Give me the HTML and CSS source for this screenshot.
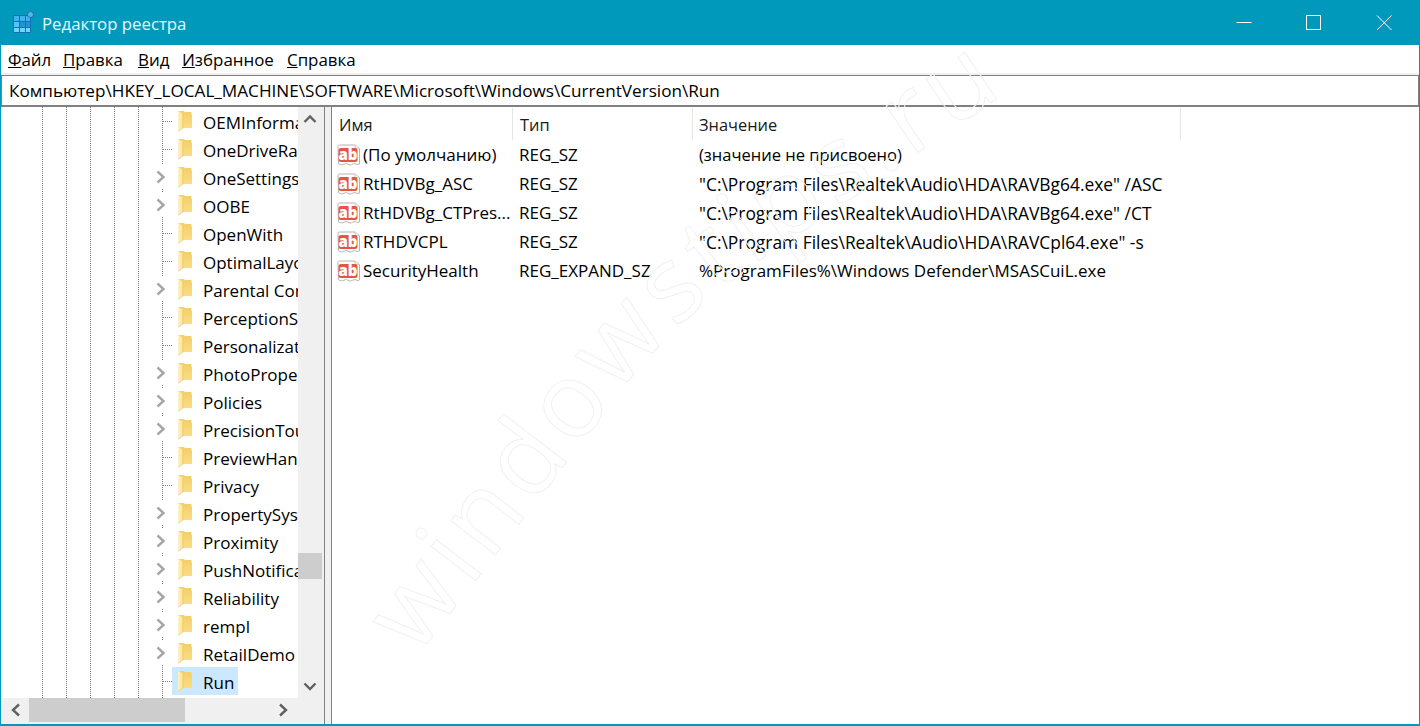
FILE: index.html
```html
<!DOCTYPE html>
<html lang="ru">
<head>
<meta charset="utf-8">
<title>Редактор реестра</title>
<link rel="stylesheet" href="styles.css">
</head>
<body>
<svg class="defs" width="0" height="0">
  <defs>
    <linearGradient id="fb" x1="0" y1="0" x2="0" y2="1"><stop offset="0" stop-color="#f3d26f"/><stop offset="1" stop-color="#fbdc83"/></linearGradient>
    <linearGradient id="ff" x1="0" y1="0" x2="1" y2="0"><stop offset="0" stop-color="#fff3c4"/><stop offset="1" stop-color="#fde08a"/></linearGradient>
    <symbol id="folder" viewBox="0 0 16 22">
      <path d="M1 1h6l1 1h6.500v16H6z" fill="#f4d06c"/>
      <path d="M6 5h9v13H6z" fill="url(#fb)"/>
      <path d="M1 1l5 2.500V18l-5 3.500z" fill="url(#ff)"/>
      <path d="M1 21.500L6 18V3.500" fill="none" stroke="#e6c25c" stroke-width=".6"/>
    </symbol>
    <symbol id="ab" viewBox="0 0 24 24">
      <path d="M1 3.500C1 2.500 1.500 2 2.500 2H18l4.500 3.500V21c-2 1.500-3.500-.8-5.500-.3s-3 2-5 1-3-1.500-5-.5-3 .8-5.500-.5z" fill="#fff" stroke="#b4b4b4"/>
      <path d="M18 2v3.500h4.500" fill="#eee" stroke="#c8c8c8" stroke-width=".8"/>
      <rect x="1.500" y="5" width="19" height="14" rx="2.500" fill="#e4563f"/>
      <text class="ab-text" x="11" y="16.500">ab</text>
    </symbol>
    <symbol id="chev" viewBox="0 0 12 14">
      <path d="M2.500 1.500L8.500 7l-6 5.500" fill="none" stroke="#a6a6a6" stroke-width="2.400"/>
    </symbol>
    <path id="wm-path" d="M417 657L622 390Q680 315 760 260L1030 76"/>
  </defs>
</svg>

<div class="window">
  <header class="titlebar">
    <svg class="app-icon" width="22" height="22" viewBox="0 0 22 22">
      <rect x="1" y="4" width="18" height="18" fill="#1470b8"/>
      <g fill="#3fb4ea">
        <rect x="2" y="5" width="5" height="5"/><rect x="8" y="5" width="5" height="5"/><rect x="14" y="5" width="4" height="5"/>
        <rect x="2" y="11" width="5" height="5" fill="#52c6f8"/><rect x="8" y="11" width="5" height="5" fill="#1f93d4"/><rect x="14" y="11" width="4" height="5" fill="#1f93d4"/>
        <rect x="2" y="17" width="5" height="4" fill="#6ed5fb"/><rect x="8" y="17" width="5" height="4" fill="#6ed5fb"/><rect x="14" y="17" width="4" height="4" fill="#6ed5fb"/>
      </g>
      <circle cx="18.500" cy="3.500" r="3" fill="#5cb6dc" stroke="#1470b8"/>
    </svg>
    <span class="title">Редактор реестра</span>
    <div class="controls">
      <button class="ctl" aria-label="Свернуть"><svg width="16" height="16" viewBox="0 0 16 16"><path d="M0.500 7.500h15" stroke="#fff" fill="none"/></svg></button>
      <button class="ctl" aria-label="Развернуть"><svg width="16" height="16" viewBox="0 0 16 16"><rect x="0.500" y="0.500" width="14" height="14" stroke="#fff" fill="none"/></svg></button>
      <button class="ctl" aria-label="Закрыть"><svg width="16" height="16" viewBox="0 0 16 16"><path d="M1 .5l14.500 14.500M15.500 .5L1 15" stroke="#fff" fill="none"/></svg></button>
    </div>
  </header>

  <nav class="menubar">
    <span class="menu m1"><u>Ф</u>айл</span>
    <span class="menu m2"><u>П</u>равка</span>
    <span class="menu m3"><u>В</u>ид</span>
    <span class="menu m4"><u>И</u>збранное</span>
    <span class="menu m5"><u>С</u>правка</span>
  </nav>

  <div class="address">Компьютер\HKEY_LOCAL_MACHINE\SOFTWARE\Microsoft\Windows\CurrentVersion\Run</div>

  <main class="panes">
    <aside class="treepane">
      <div class="tree-top">
        <div class="tree">
          <div class="node leaf"><svg class="folder"><use href="#folder"/></svg><span class="label">OEMInformation</span></div>
          <div class="node leaf"><svg class="folder"><use href="#folder"/></svg><span class="label">OneDriveRamps</span></div>
          <div class="node"><svg class="chev"><use href="#chev"/></svg><svg class="folder"><use href="#folder"/></svg><span class="label">OneSettings</span></div>
          <div class="node"><svg class="chev"><use href="#chev"/></svg><svg class="folder"><use href="#folder"/></svg><span class="label">OOBE</span></div>
          <div class="node leaf"><svg class="folder"><use href="#folder"/></svg><span class="label">OpenWith</span></div>
          <div class="node leaf"><svg class="folder"><use href="#folder"/></svg><span class="label">OptimalLayout</span></div>
          <div class="node"><svg class="chev"><use href="#chev"/></svg><svg class="folder"><use href="#folder"/></svg><span class="label">Parental Controls</span></div>
          <div class="node leaf"><svg class="folder"><use href="#folder"/></svg><span class="label">PerceptionSimulation</span></div>
          <div class="node leaf"><svg class="folder"><use href="#folder"/></svg><span class="label">Personalization</span></div>
          <div class="node"><svg class="chev"><use href="#chev"/></svg><svg class="folder"><use href="#folder"/></svg><span class="label">PhotoPropertyHandler</span></div>
          <div class="node"><svg class="chev"><use href="#chev"/></svg><svg class="folder"><use href="#folder"/></svg><span class="label">Policies</span></div>
          <div class="node"><svg class="chev"><use href="#chev"/></svg><svg class="folder"><use href="#folder"/></svg><span class="label">PrecisionTouchPad</span></div>
          <div class="node leaf"><svg class="folder"><use href="#folder"/></svg><span class="label">PreviewHandlers</span></div>
          <div class="node leaf"><svg class="folder"><use href="#folder"/></svg><span class="label">Privacy</span></div>
          <div class="node"><svg class="chev"><use href="#chev"/></svg><svg class="folder"><use href="#folder"/></svg><span class="label">PropertySystem</span></div>
          <div class="node"><svg class="chev"><use href="#chev"/></svg><svg class="folder"><use href="#folder"/></svg><span class="label">Proximity</span></div>
          <div class="node"><svg class="chev"><use href="#chev"/></svg><svg class="folder"><use href="#folder"/></svg><span class="label">PushNotifications</span></div>
          <div class="node"><svg class="chev"><use href="#chev"/></svg><svg class="folder"><use href="#folder"/></svg><span class="label">Reliability</span></div>
          <div class="node"><svg class="chev"><use href="#chev"/></svg><svg class="folder"><use href="#folder"/></svg><span class="label">rempl</span></div>
          <div class="node"><svg class="chev"><use href="#chev"/></svg><svg class="folder"><use href="#folder"/></svg><span class="label">RetailDemo</span></div>
          <div class="node leaf last"><span class="selbg"></span><svg class="folder"><use href="#folder"/></svg><span class="label">Run</span></div>
        </div>
        <div class="vscroll">
          <svg class="arrow" width="24" height="24" viewBox="0 0 24 24"><path d="M6.500 15L12 9.500l5.500 5.500" fill="none" stroke="#606060" stroke-width="2.400"/></svg>
          <div class="vtrack"><div class="vthumb"></div></div>
          <svg class="arrow" width="24" height="24" viewBox="0 0 24 24"><path d="M6.500 9.500L12 15l5.500-5.500" fill="none" stroke="#606060" stroke-width="2.400"/></svg>
        </div>
      </div>
      <div class="hscroll">
        <svg class="arrow" width="27" height="24" viewBox="0 0 27 24"><path d="M17 6.500L11 12l6 5.500" fill="none" stroke="#606060" stroke-width="2.400"/></svg>
        <div class="htrack"><div class="hthumb"></div></div>
        <svg class="arrow hs-right" width="24" height="24" viewBox="0 0 24 24"><path d="M9 6.500l6 5.500-6 5.500" fill="none" stroke="#606060" stroke-width="2.400"/></svg>
      </div>
    </aside>
    <div class="splitter"></div>
    <section class="list">
      <div class="list-head">
        <div class="th th-name">Имя</div>
        <div class="th th-type">Тип</div>
        <div class="th th-value">Значение</div>
      </div>
      <div class="row"><svg class="ab"><use href="#ab"/></svg><span class="c-name">(По умолчанию)</span><span class="c-type">REG_SZ</span><span class="c-value narrow">(значение не присвоено)</span></div>
      <div class="row"><svg class="ab"><use href="#ab"/></svg><span class="c-name">RtHDVBg_ASC</span><span class="c-type">REG_SZ</span><span class="c-value wide">"C:\Program Files\Realtek\Audio\HDA\RAVBg64.exe" /ASC</span></div>
      <div class="row"><svg class="ab"><use href="#ab"/></svg><span class="c-name">RtHDVBg_CTPres...</span><span class="c-type">REG_SZ</span><span class="c-value wide">"C:\Program Files\Realtek\Audio\HDA\RAVBg64.exe" /CT</span></div>
      <div class="row"><svg class="ab"><use href="#ab"/></svg><span class="c-name">RTHDVCPL</span><span class="c-type">REG_SZ</span><span class="c-value wide">"C:\Program Files\Realtek\Audio\HDA\RAVCpl64.exe" -s</span></div>
      <div class="row"><svg class="ab"><use href="#ab"/></svg><span class="c-name">SecurityHealth</span><span class="c-type">REG_EXPAND_SZ</span><span class="c-value">%ProgramFiles%\Windows Defender\MSASCuiL.exe</span></div>
    </section>
  </main>

  <svg class="watermark" width="1420" height="726" viewBox="0 0 1420 726" aria-hidden="true">
    <text class="wm-text"><textPath href="#wm-path">windowstips.ru</textPath></text>
  </svg>
</div>
</body>
</html>
```
FILE: styles.css
```css
* { box-sizing: border-box; }
html, body { margin: 0; padding: 0; height: 100%; }
body { font-family: "Open Sans", "Noto Sans", sans-serif; font-size: 17px; color: #000; background: #fff; overflow: hidden; }
.defs { position: absolute; }

.window { position: relative; width: 1420px; height: 726px; display: flex; flex-direction: column; border: 1px solid #0099bc; border-bottom-width: 2px; background: #f0f0f0; }

.titlebar { flex: 0 0 44px; background: #0099bc; display: flex; align-items: center; color: #fff; padding-left: 11px; }
.app-icon { flex: none; margin-top: -2px; }
.title { margin-left: 8px; font-size: 16.800px; color: #e8f7fb; }
.controls { margin-left: auto; display: flex; }
.ctl { width: 70px; height: 44px; background: none; border: 0; padding: 0; display: flex; align-items: center; justify-content: center; margin-top: -1px; }

.menubar { flex: 0 0 28px; background: #fff; display: flex; align-items: center; padding: 1px 0 0 7px; line-height: 27px; margin-bottom: 2px; font-size: 16.900px; }
.menu { white-space: nowrap; }
.m1 { width: 55px; }
.m2 { width: 75px; }
.m3 { width: 44px; }
.m4 { width: 105px; }

.address { flex: 0 0 32px; min-height: 0; overflow: hidden; background: #fff; border: 1px solid #808080; border-bottom-width: 2px; padding-left: 7px; line-height: 30px; white-space: nowrap; font-size: 17.150px; }

.panes { flex: 1; min-height: 0; display: flex; }
.treepane { flex: 0 0 323px; display: flex; flex-direction: column; background: #f0f0f0; border-right: 1px solid #808080; padding-left: 1px; }
.tree-top { height: 591px; display: flex; }
.tree { width: 296px; height: 591px; overflow: hidden; background-color: #fff;
  background-image:
    linear-gradient(#808080 50%, transparent 50%), linear-gradient(#808080 50%, transparent 50%),
    linear-gradient(#808080 50%, transparent 50%), linear-gradient(#808080 50%, transparent 50%),
    linear-gradient(#808080 50%, transparent 50%), linear-gradient(#808080 50%, transparent 50%);
  background-size: 1px 2px;
  background-repeat: repeat-y;
  background-position: 40px 0, 64px 0, 88px 0, 112px 0, 136px 0, 160px 0; }
.node { position: relative; height: 28px; display: flex; align-items: center; padding-left: 175px; white-space: nowrap; }
.node .label { position: relative; margin-left: 10px; line-height: 30px; top: 2px; }
.folder { position: relative; width: 16px; height: 22px; margin-top: -1px; flex: none; }
.chev { position: absolute; left: 153px; top: 2px; width: 12px; height: 24px; background: #fff; }
.leaf::before { content: ""; position: absolute; left: 161px; top: 14px; width: 10px; height: 1px; background: linear-gradient(90deg, #808080 50%, transparent 50%) 0 0 / 2px 1px repeat-x; }
.selbg { position: absolute; left: 170px; top: 0; width: 66px; height: 28px; background: #cce8ff; }

.vscroll { flex: 0 0 26px; display: flex; flex-direction: column; background: #f0f0f0; padding-right: 2px; }
.arrow { flex: none; display: block; }
.vtrack { flex: 1; display: flex; flex-direction: column; justify-content: flex-end; padding-bottom: 95px; }
.vthumb { height: 26px; background: #cdcdcd; }

.hscroll { flex: 0 0 24px; display: flex; width: 320px; background: #f0f0f0; }
.htrack { flex: 1; }
.hthumb { width: 156px; height: 24px; background: #cdcdcd; }
.hs-right { margin-right: 27px; }

.splitter { flex: 0 0 6px; background: #f0f0f0; }
.list { flex: 1; min-width: 0; background: #fff; border-left: 1px solid #808080; padding-top: 1px; }
.list-head { display: flex; height: 32px; font-size: 16.400px; }
.th { line-height: 34px; padding-left: 7px; border-right: 1px solid #e5e5e5; white-space: nowrap; color: #1a1a1a; }
.th-name { width: 181px; }
.th-type { width: 180px; }
.th-value { width: 488px; padding-left: 6px; }
.row { height: 29px; display: flex; align-items: center; white-space: nowrap; padding-left: 5px; }
.ab { width: 24px; height: 24px; flex: none; }
.ab-text { font: 800 15px "Open Sans", sans-serif; fill: #fff; text-anchor: middle; }
.c-name { width: 156px; margin-left: 2px; }
.c-type { width: 180px; }
.c-value { flex: none; }
.c-value.wide { font-size: 17.400px; }
.c-value.narrow { font-size: 16.500px; }

.watermark { position: absolute; left: -1px; top: -1px; pointer-events: none; }
.wm-text { font-family: "Open Sans", sans-serif; font-size: 105px; letter-spacing: 6px; fill: none; stroke: #f1f1f1; stroke-width: 1; }
```
